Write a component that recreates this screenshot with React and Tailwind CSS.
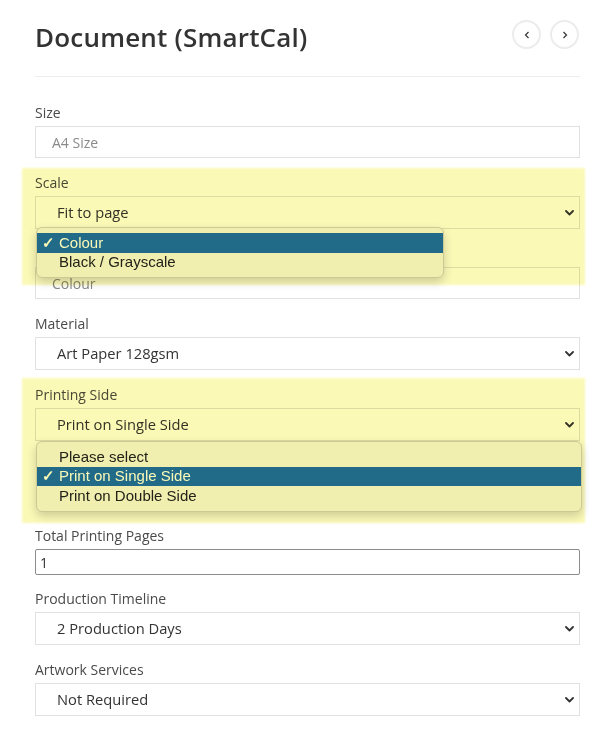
import React from 'react';

const Chevron = () => (
  <svg width="9" height="6" viewBox="0 0 9 6" className="shrink-0">
    <path d="M1 1l3.5 3.5L8 1" fill="none" stroke="#333" strokeWidth="1.8" strokeLinecap="round" strokeLinejoin="round" />
  </svg>
);

const Label = ({ children }) => (
  <div className="h-5 leading-5 text-[14px] text-[#4a4a4a] mb-[3px]">{children}</div>
);

const ReadOnlyField = ({ value }) => (
  <div className="h-[32px] border border-[#e1e1e1] bg-white flex items-center pl-[16px] text-[14px] text-[#8a8a8a]">
    {value}
  </div>
);

const SelectField = ({ value }) => (
  <div className="h-[33px] border border-[#e1e1e1] bg-white flex items-center justify-between pl-[21px] pr-[5px] text-[14.7px] text-[#333]">
    <span>{value}</span>
    <Chevron />
  </div>
);

const Menu = ({ options, selected, className }) => (
  <div
    className={`absolute z-10 rounded-[6px] border border-[#cfcfcf] bg-[#f5f5f5] py-[5px] shadow-[0_4px_10px_rgba(0,0,0,0.18)] ${className}`}
    style={{ fontFamily: '"Liberation Sans", Arial, sans-serif' }}
  >
    {options.map((opt) => (
      <div
        key={opt}
        className={`h-[19.5px] flex items-center text-[15px] ${
          opt === selected ? 'bg-[#216dbf] text-white' : 'text-[#222]'
        }`}
      >
        <span className="w-[22px] pl-[5px] text-[15px] font-bold">{opt === selected ? '✓' : ''}</span>
        <span>{opt}</span>
      </div>
    ))}
  </div>
);

const Highlight = ({ className }) => (
  <div
    className={`absolute pointer-events-none z-20 bg-[#fbf9b6] mix-blend-multiply blur-[1px] ${className}`}
  />
);

export default function App() {
  return (
    <div
      className="w-[600px] min-h-[733px] bg-white pl-[35px] pr-[20px] pt-[19px]"
      style={{ fontFamily: '"Open Sans", "Noto Sans", sans-serif' }}
    >
      <div className="flex items-start justify-between">
        <h1 className="text-[26px] leading-[36px] font-semibold text-[#333] tracking-[0.2px]">Document (SmartCal)</h1>
        <div className="flex gap-[9px] mr-[1px] mt-[1px]">
          <button className="w-[29px] h-[29px] rounded-full border-2 border-[#ececec] flex items-center justify-center">
            <svg width="6" height="8" viewBox="0 0 6 8"><path d="M4.5 1L1.5 4l3 3" fill="none" stroke="#333" strokeWidth="1.2" /></svg>
          </button>
          <button className="w-[29px] h-[29px] rounded-full border-2 border-[#ececec] flex items-center justify-center">
            <svg width="6" height="8" viewBox="0 0 6 8"><path d="M1.5 1l3 3-3 3" fill="none" stroke="#333" strokeWidth="1.2" /></svg>
          </button>
        </div>
      </div>

      <div className="mt-[21px] border-t border-[#eeeeee]" />

      <div className="mt-[26px] flex flex-col gap-[15px]">
        <div>
          <Label>Size</Label>
          <ReadOnlyField value="A4 Size" />
        </div>

        <div className="relative flex flex-col gap-[15px]">
          <Highlight className="-top-[5px] -left-[13px] -right-[5px] h-[117px]" />
          <div className="relative">
            <Label>Scale</Label>
            <SelectField value="Fit to page" />
            <Menu
              options={['Colour', 'Black / Grayscale']}
              selected="Colour"
              className="left-[1px] top-[54px] w-[408px]"
            />
          </div>
          <div>
            <div className="h-5 mb-[3px]" />
            <ReadOnlyField value="Colour" />
          </div>
        </div>

        <div>
          <Label>Material</Label>
          <SelectField value="Art Paper 128gsm" />
        </div>

        <div className="relative mb-[71px]">
          <Highlight className="-top-[7px] -left-[13px] -right-[5px] h-[145px]" />
          <Label>Printing Side</Label>
          <SelectField value="Print on Single Side" />
          <Menu
            options={['Please select', 'Print on Single Side', 'Print on Double Side']}
            selected="Print on Single Side"
            className="left-[1px] -right-[2px] top-[56px]"
          />
        </div>

        <div className="-mt-[1px]">
          <Label>Total Printing Pages</Label>
          <div className="h-[26px] border border-[#8c8c8c] rounded-[2px] flex items-center pl-[4px] text-[14px] text-[#333]">
            1
          </div>
        </div>

        <div className="-mt-[1px]">
          <Label>Production Timeline</Label>
          <SelectField value="2 Production Days" />
        </div>

        <div>
          <Label>Artwork Services</Label>
          <SelectField value="Not Required" />
        </div>
      </div>
    </div>
  );
}
